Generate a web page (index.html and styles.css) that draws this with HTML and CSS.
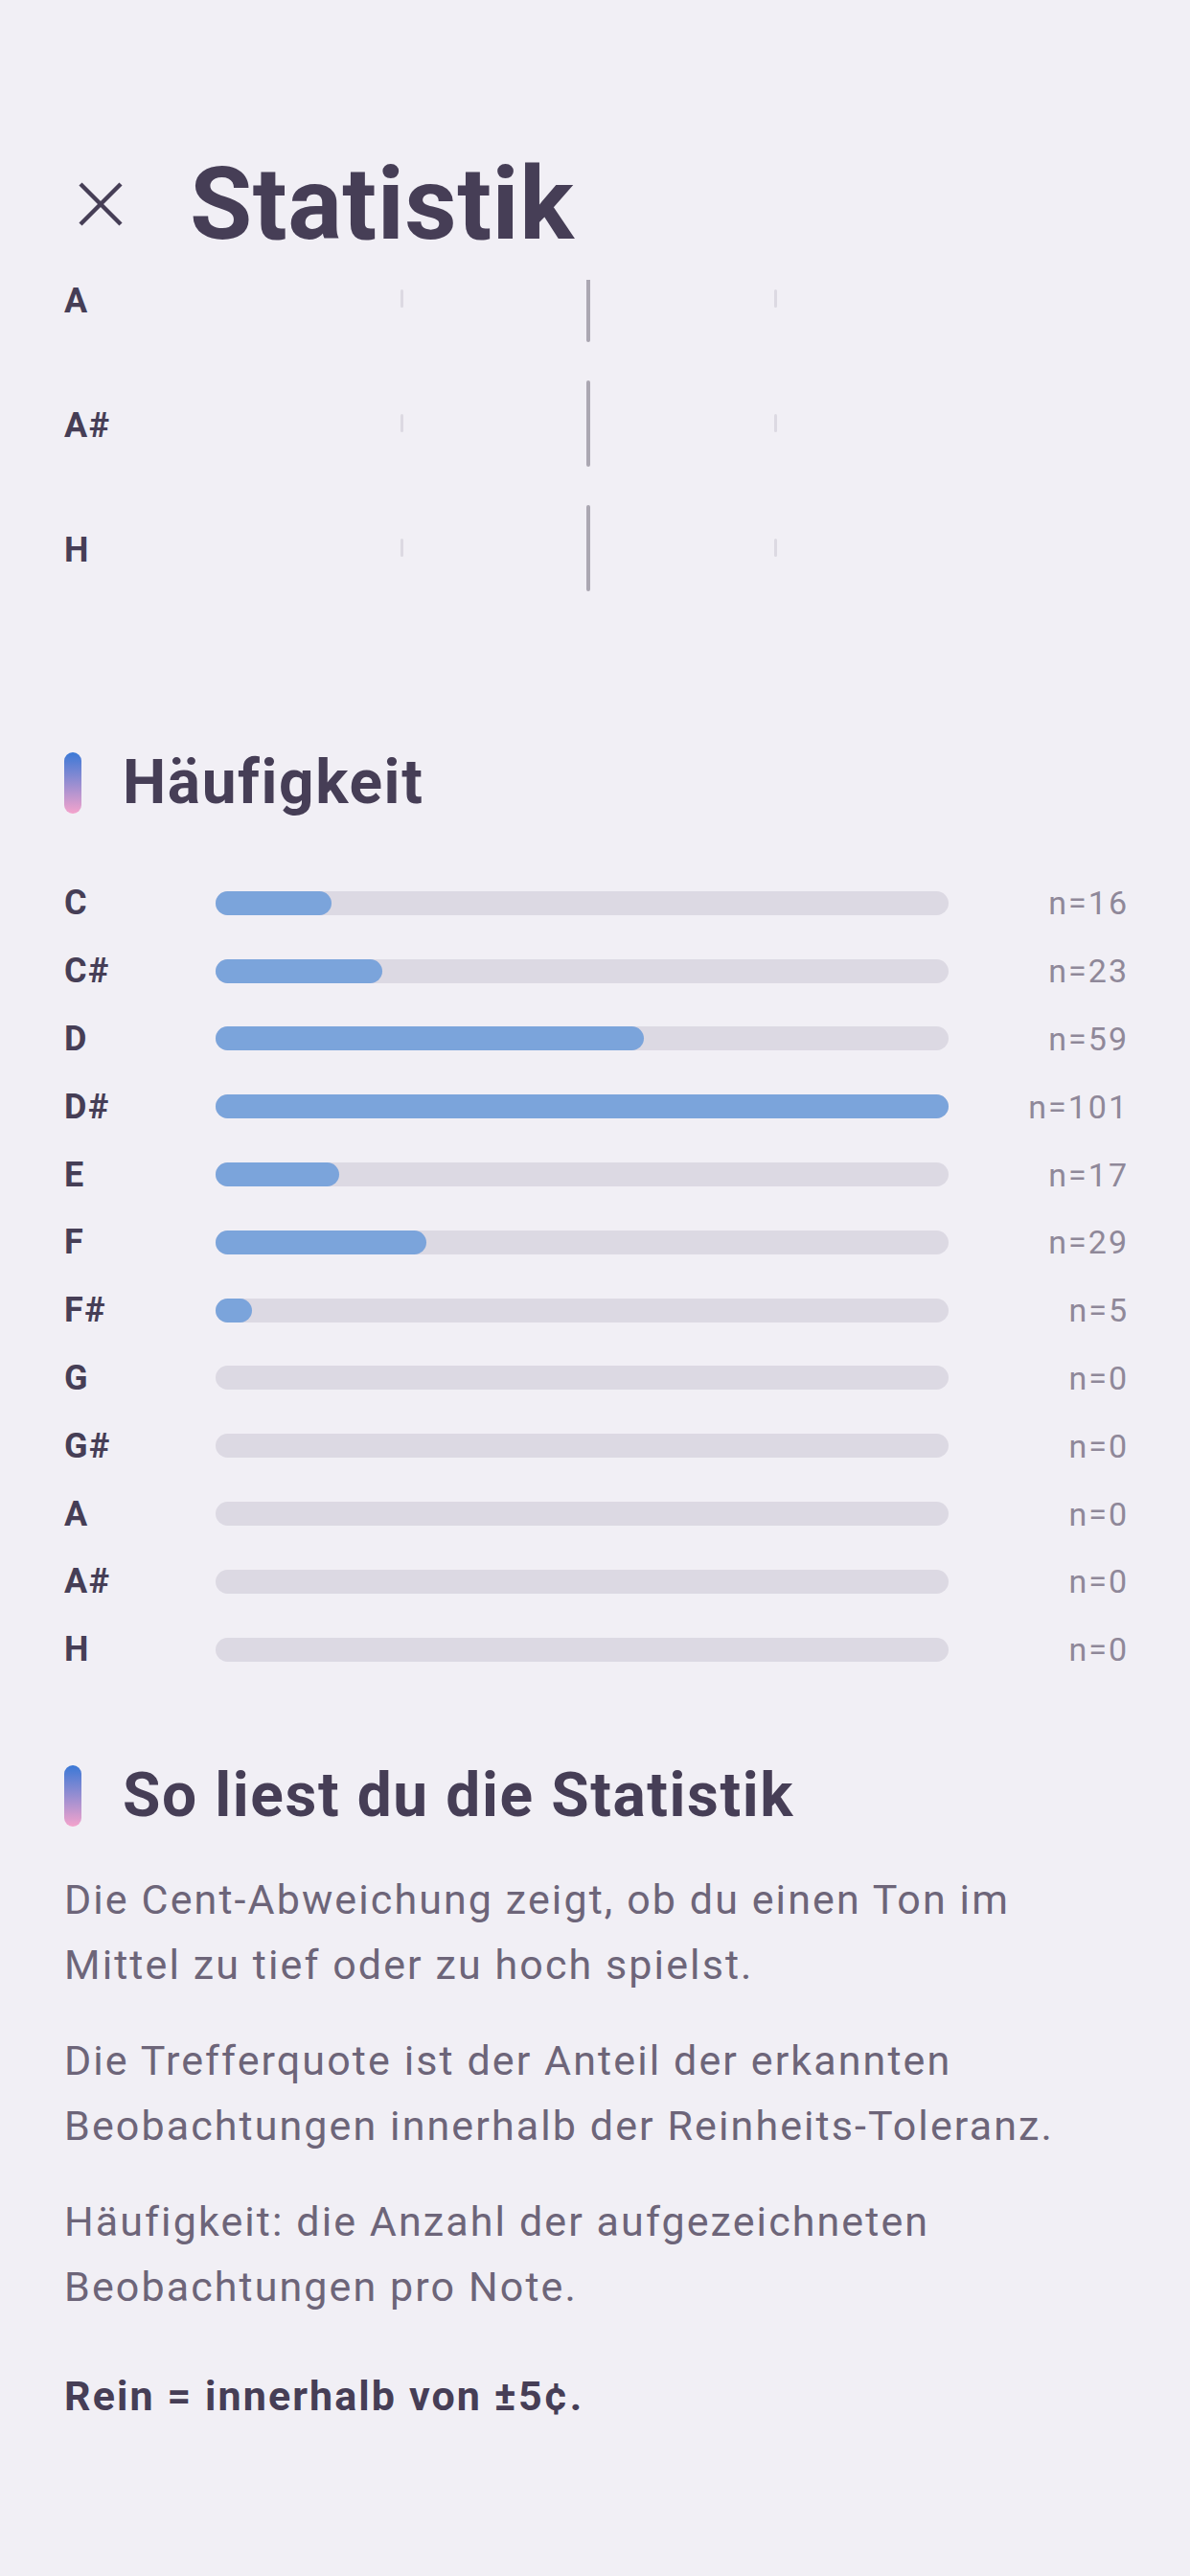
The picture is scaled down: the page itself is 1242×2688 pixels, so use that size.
FILE: index.html
```html
<!DOCTYPE html>
<html lang="de">
<head>
  <meta charset="UTF-8">
  <title>Statistik</title>
  <link rel="stylesheet" href="styles.css">
</head>
<body>

  <div id="topbar">
    <button id="closeBtn" aria-label="Schließen">
      <svg viewBox="0 0 46 46" width="46" height="46">
        <line x1="2" y1="2" x2="44" y2="44" />
        <line x1="44" y1="2" x2="2" y2="44" />
      </svg>
    </button>
    <h1>Statistik</h1>
  </div>

  <!-- Cent-Abweichung, nach oben gescrollt -->
  <div class="devClip">
    <div class="devList">
      <div class="devRow">
        <span class="note">A</span>
        <div class="devPlot"><i class="tick t1"></i><i class="zero"></i><i class="tick t3"></i></div>
      </div>
      <div class="devRow">
        <span class="note">A#</span>
        <div class="devPlot"><i class="tick t1"></i><i class="zero"></i><i class="tick t3"></i></div>
      </div>
      <div class="devRow">
        <span class="note">H</span>
        <div class="devPlot"><i class="tick t1"></i><i class="zero"></i><i class="tick t3"></i></div>
      </div>
    </div>
  </div>

  <div class="section freqSection">
    <h2 class="sectionTitle"><span class="accent"></span>Häufigkeit</h2>
    <div class="freqList">
      <div class="freqRow"><span class="note">C</span><div class="track"><div class="fill" style="width:15.84%"></div></div><span class="count">n=16</span></div>
      <div class="freqRow"><span class="note">C#</span><div class="track"><div class="fill" style="width:22.77%"></div></div><span class="count">n=23</span></div>
      <div class="freqRow"><span class="note">D</span><div class="track"><div class="fill" style="width:58.42%"></div></div><span class="count">n=59</span></div>
      <div class="freqRow"><span class="note">D#</span><div class="track"><div class="fill" style="width:100%"></div></div><span class="count">n=101</span></div>
      <div class="freqRow"><span class="note">E</span><div class="track"><div class="fill" style="width:16.83%"></div></div><span class="count">n=17</span></div>
      <div class="freqRow"><span class="note">F</span><div class="track"><div class="fill" style="width:28.71%"></div></div><span class="count">n=29</span></div>
      <div class="freqRow"><span class="note">F#</span><div class="track"><div class="fill" style="width:4.95%"></div></div><span class="count">n=5</span></div>
      <div class="freqRow"><span class="note">G</span><div class="track"></div><span class="count">n=0</span></div>
      <div class="freqRow"><span class="note">G#</span><div class="track"></div><span class="count">n=0</span></div>
      <div class="freqRow"><span class="note">A</span><div class="track"></div><span class="count">n=0</span></div>
      <div class="freqRow"><span class="note">A#</span><div class="track"></div><span class="count">n=0</span></div>
      <div class="freqRow"><span class="note">H</span><div class="track"></div><span class="count">n=0</span></div>
    </div>
  </div>

  <div class="section helpSection">
    <h2 class="sectionTitle"><span class="accent"></span>So liest du die Statistik</h2>
    <p>Die Cent-Abweichung zeigt, ob du einen Ton im Mittel zu tief oder zu hoch spielst.</p>
    <p>Die Trefferquote ist der Anteil der erkannten Beobachtungen innerhalb der Reinheits-Toleranz.</p>
    <p>Häufigkeit: die Anzahl der aufgezeichneten Beobachtungen pro Note.</p>
    <p class="strong">Rein = innerhalb von ±5¢.</p>
  </div>

</body>
</html>
```

FILE: styles.css
```css
body {
  font-family: Roboto, "Liberation Sans", sans-serif;
  background-color: #f1eff5;
  color: #463e56;
  margin: 0;
  padding: 0;
}

#topbar {
  height: 292px;
  box-sizing: border-box;
  padding: 160px 0 0 82px;
  display: flex;
  align-items: flex-start;
  gap: 70px;
}

#closeBtn {
  margin-top: 30px;
  width: 46px;
  height: 46px;
  padding: 0;
  border: none;
  background: none;
  cursor: pointer;
}

#closeBtn svg {
  display: block;
  stroke: #463e56;
  stroke-width: 4.5;
}

h1 {
  margin: 0;
  font-size: 106px;
  line-height: 106px;
  font-weight: 700;
  letter-spacing: 0.5px;
}

.note {
  font-size: 36px;
  font-weight: 700;
  letter-spacing: 1.5px;
  color: #463e56;
}

/* cent chart */
.devClip {
  height: 345px;
  overflow: hidden;
}

.devList {
  margin-top: -43px;
  padding: 0 67px;
}

.devRow {
  height: 130px;
  display: flex;
  align-items: center;
}

.devRow .note {
  width: 157px;
  line-height: 28px;
}

.devPlot {
  position: relative;
  width: 780px;
  height: 90px;
}

.devPlot i {
  position: absolute;
  top: 50%;
  border-radius: 2px;
}

.devPlot .zero {
  left: 388px;
  width: 4px;
  height: 90px;
  margin-top: -47px;
  background: #aba7b2;
}

.devPlot .tick {
  width: 3px;
  height: 19px;
  margin-top: -12px;
  background: #dcd9e2;
}

.devPlot .t1 { left: 194px; }
.devPlot .t3 { left: 584px; }

/* sections */
.section {
  padding: 0 64px 0 67px;
}

.freqSection {
  margin-top: 148px;
}

.sectionTitle {
  display: flex;
  align-items: center;
  gap: 43px;
  margin: 0;
  height: 64px;
  font-size: 64px;
  line-height: 64px;
  font-weight: 700;
  letter-spacing: 1.6px;
}

.accent {
  width: 18px;
  height: 64px;
  border-radius: 9px;
  background: linear-gradient(#3a78d6, #f4a3cc);
}

.freqList {
  margin-top: 58px;
}

.freqRow {
  height: 70.8px;
  display: flex;
  align-items: center;
}

.freqRow .note {
  width: 158px;
}

.track {
  width: 765px;
  height: 25px;
  border-radius: 12.5px;
  background: #dcd9e3;
}

.fill {
  height: 100%;
  min-width: 25px;
  border-radius: 12.5px;
  background: #7ba4db;
}

.count {
  flex: 1;
  text-align: right;
  font-size: 34px;
  letter-spacing: 2px;
  color: #8f8899;
}

.helpSection {
  margin-top: 85px;
}

.helpSection .sectionTitle {
  margin-bottom: 42px;
}

.helpSection p {
  margin: 0 0 31px 0;
  font-size: 43px;
  line-height: 68.5px;
  letter-spacing: 2.1px;
  color: #6d6579;
}

.helpSection p.strong {
  margin-top: 45px;
  font-weight: 700;
  color: #463e56;
}
```
